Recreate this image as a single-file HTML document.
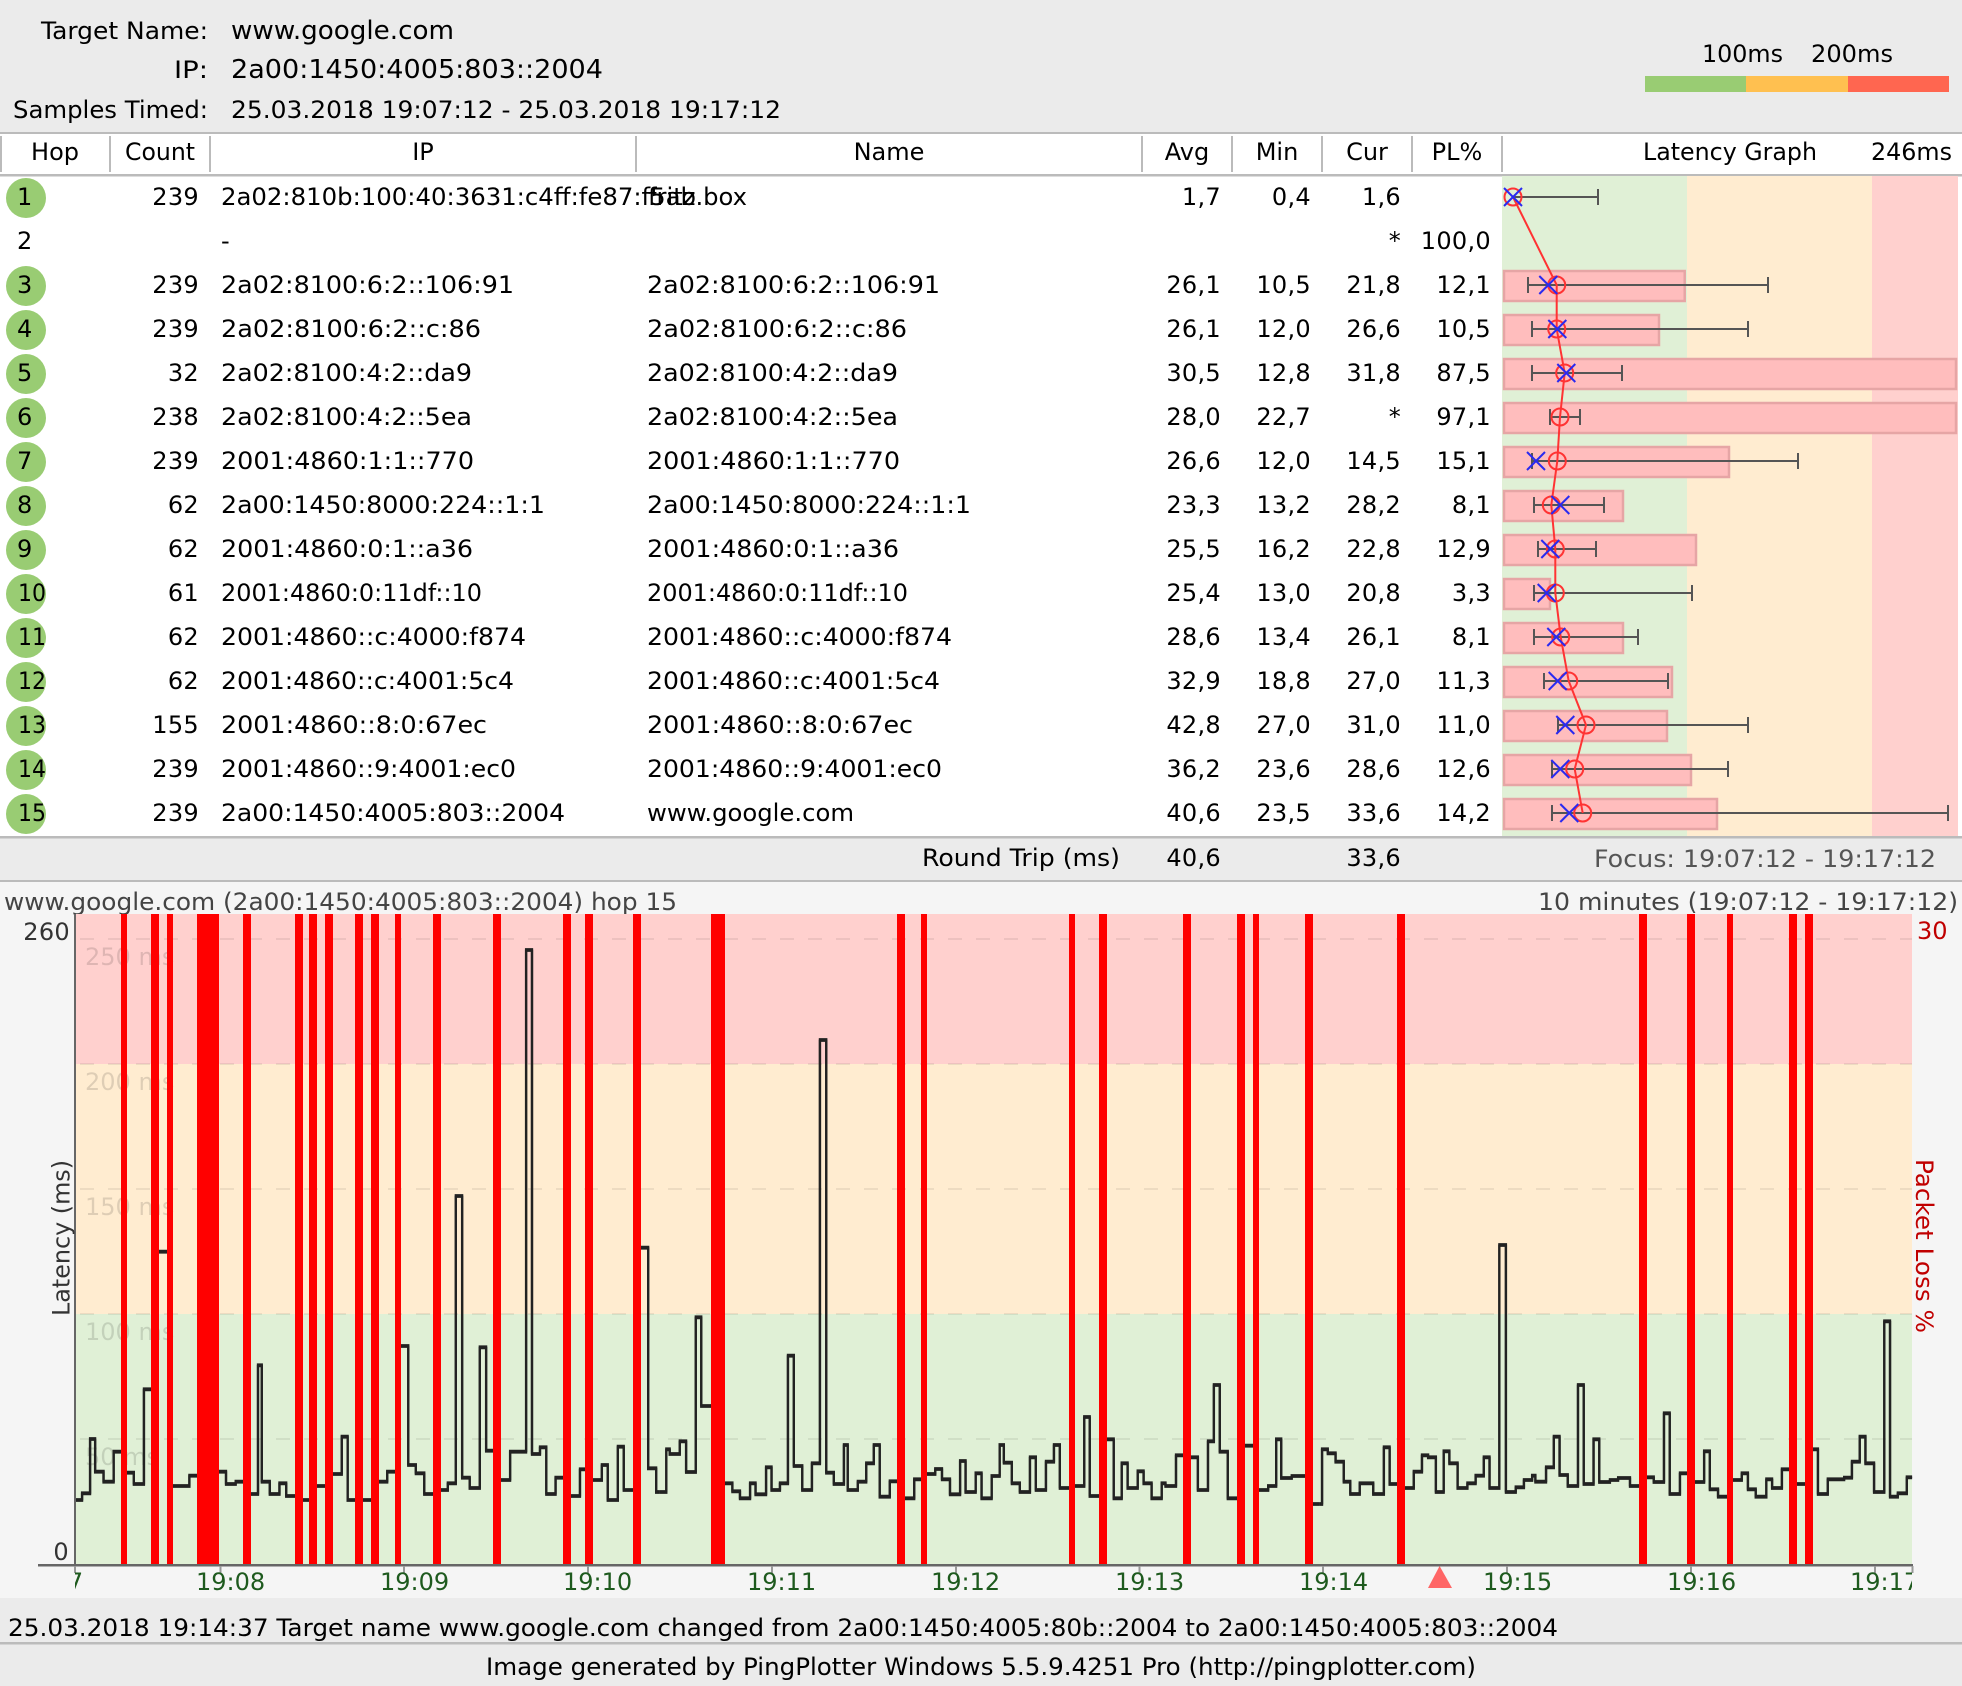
<!DOCTYPE html>
<html><head><meta charset="utf-8"><title>PingPlotter</title>
<style>
html,body{margin:0;padding:0;background:#fff}
svg{display:block;font-family:"DejaVu Sans","Liberation Sans",sans-serif;font-size:24px;fill:#000}
.r{text-anchor:end;letter-spacing:.3px}.c{text-anchor:middle}
</style></head><body>
<svg xmlns="http://www.w3.org/2000/svg" width="1962" height="1686" viewBox="0 0 1962 1686">
<defs>
<clipPath id="cp"><rect x="75" y="1566" width="1837" height="32"/></clipPath>
<path id="x" d="M-9-9L9 9M-9 9L9-9" fill="none" stroke="#2a2af0" stroke-width="2"/>
<path id="pa" fill="none" stroke="#222" stroke-width="2.3" vector-effect="non-scaling-stroke" d="M178 660H195V640H214V477H226V575H246V605H270V515H295V578H318V612H342V328H365V-85H400V618H450V587H490V575H537V612H560V605H585V642H613V256H622V605H641V642H664V610H680V648H710V660H745V618H780V582H812V470H826V660H890V605H920V575H945V198H970V555H988V580H1008V642H1040V630H1064V610H1083V-252H1098V593H1116V624H1140V202H1155V512H1180V600H1212V515H1250V-990H1264V522H1283V502H1298V642H1320V593H1348V648H1378V568H1400V600H1430V555H1444V660H1468V500H1482V630H1515V-97H1540V565H1559V636H1568"/>
<path id="pb" fill="none" stroke="#222" stroke-width="2.3" vector-effect="non-scaling-stroke" d="M0 636H15V508H23V522H47V484H62V576H85V112H98V378H135V610H172V634H190V655H214V610H227V643H252V562H265V630H285V610H304V227H318V558H338V630H361V550H380V-720H395V578H413V612H437V495H446V630H470V605H490V550H508V495H522V650H546V604H570V655H604V598H627V582H654V567H670V598H689V643H713V543H726V636H750V580H764V655H788V588H807V495H817V548H836V610H855V636H879V532H893V630H917V545H936V495H950V624H980V618H1008V411H1021V648H1050V478H1078V655H1097V550H1111V624H1135V574H1149V610H1168V655H1192V610H1201V618H1226V526H1250V532H1278V630H1302V484H1316V315H1330V515H1349V655H1380V497H1415V630H1445V618H1464V478H1476V594H1501V588H1540V672H1568"/>
<path id="pc" fill="none" stroke="#222" stroke-width="2.3" vector-effect="non-scaling-stroke" d="M0 672H5V508H19V520H38V545H58V605H74V642H97V610H130V642H156V502H170V612H198V624H229V575H249V526H264V532H283V636H302V514H316V550H336V624H360V610H380V587H400V532H414V624H438V-105H454V636H478V622H498V600H518V587H526V605H552V562H571V470H585V585H605V618H630V315H644V612H668V478H682V606H708V600H728V594H757V618H790V592H815V606H840V400H854V642H879V580H905V606H938V514H952V628H972V650H1000V600H1030V580H1045V628H1064V650H1090V598H1104V624H1128V568H1155V612H1195V508H1216V642H1240V598H1280V593H1299V545H1318V470H1332V550H1353V636H1378V124H1392V650H1411V640H1433V592H1446"/>
</defs>

<!-- backgrounds -->
<rect width="1962" height="1686" fill="#ebebeb"/>
<rect y="132" width="1962" height="2.5" fill="#bbb"/>
<rect y="134" width="1962" height="702" fill="#fff"/>
<rect y="174" width="1962" height="2.5" fill="#bbb"/>
<rect y="836" width="1962" height="2.5" fill="#bbb"/>
<rect y="880" width="1962" height="2.5" fill="#bbb"/>
<rect y="882" width="1962" height="716" fill="#f5f5f5"/>
<rect y="1642" width="1962" height="2.5" fill="#bbb"/>

<!-- top header -->
<text x="41" y="39" textLength="167" lengthAdjust="spacingAndGlyphs">Target Name:</text>
<text x="174" y="78" textLength="34" lengthAdjust="spacingAndGlyphs">IP:</text>
<text x="13" y="118" textLength="195" lengthAdjust="spacingAndGlyphs">Samples Timed:</text>
<text x="231" y="39" font-size="26" textLength="223" lengthAdjust="spacingAndGlyphs">www.google.com</text>
<text x="231" y="78" font-size="26" textLength="372" lengthAdjust="spacingAndGlyphs">2a00:1450:4005:803::2004</text>
<text x="231" y="118" textLength="550" lengthAdjust="spacingAndGlyphs">25.03.2018 19:07:12 - 25.03.2018 19:17:12</text>
<text x="1702" y="62" textLength="81" lengthAdjust="spacingAndGlyphs">100ms</text>
<text x="1811" y="62" textLength="82" lengthAdjust="spacingAndGlyphs">200ms</text>
<rect x="1645" y="76" width="101" height="16" fill="#99cc73"/>
<rect x="1746" y="76" width="102" height="16" fill="#ffc050"/>
<rect x="1848" y="76" width="101" height="16" fill="#ff6650"/>

<!-- table header -->
<path d="M1 136V172M110 136V172M210 136V172M636 136V172M1142 136V172M1232 136V172M1322 136V172M1412 136V172M1502 136V172" stroke="#bbb" stroke-width="2" fill="none"/>
<g>
<text class="c" x="55" y="160">Hop</text>
<text x="125" y="160" textLength="70" lengthAdjust="spacingAndGlyphs">Count</text>
<text class="c" x="423" y="160">IP</text>
<text class="c" x="889" y="160">Name</text>
<text class="c" x="1187" y="160">Avg</text>
<text class="c" x="1277" y="160">Min</text>
<text class="c" x="1367" y="160">Cur</text>
<text class="c" x="1457" y="160">PL%</text>
<text x="1643" y="160" textLength="174" lengthAdjust="spacingAndGlyphs">Latency Graph</text>
<text x="1871" y="160" textLength="81" lengthAdjust="spacingAndGlyphs">246ms</text>
</g>

<!-- hop circles -->
<g fill="#99cc73">
<circle cx="26" cy="198" r="20"/><circle cx="26" cy="286" r="20"/><circle cx="26" cy="330" r="20"/><circle cx="26" cy="374" r="20"/><circle cx="26" cy="418" r="20"/><circle cx="26" cy="462" r="20"/><circle cx="26" cy="506" r="20"/><circle cx="26" cy="550" r="20"/><circle cx="26" cy="594" r="20"/><circle cx="26" cy="638" r="20"/><circle cx="26" cy="682" r="20"/><circle cx="26" cy="726" r="20"/><circle cx="26" cy="770" r="20"/><circle cx="26" cy="814" r="20"/>
</g>

<!-- rows -->
<g transform="translate(0,205)"><text x="17">1</text><text class="r" x="199">239</text><text x="221" textLength="475" lengthAdjust="spacingAndGlyphs">2a02:810b:100:40:3631:c4ff:fe87:f5ab</text><text x="648" textLength="99" lengthAdjust="spacingAndGlyphs">fritz.box</text><text class="r" x="1221">1,7</text><text class="r" x="1311">0,4</text><text class="r" x="1401">1,6</text></g>
<g transform="translate(0,249)"><text x="17">2</text><text x="221">-</text><text class="r" x="1401">*</text><text class="r" x="1491">100,0</text></g>
<g transform="translate(0,293)"><text x="17">3</text><text class="r" x="199">239</text><text x="221" textLength="293" lengthAdjust="spacingAndGlyphs">2a02:8100:6:2::106:91</text><text x="647" textLength="293" lengthAdjust="spacingAndGlyphs">2a02:8100:6:2::106:91</text><text class="r" x="1221">26,1</text><text class="r" x="1311">10,5</text><text class="r" x="1401">21,8</text><text class="r" x="1491">12,1</text></g>
<g transform="translate(0,337)"><text x="17">4</text><text class="r" x="199">239</text><text x="221" textLength="260" lengthAdjust="spacingAndGlyphs">2a02:8100:6:2::c:86</text><text x="647" textLength="260" lengthAdjust="spacingAndGlyphs">2a02:8100:6:2::c:86</text><text class="r" x="1221">26,1</text><text class="r" x="1311">12,0</text><text class="r" x="1401">26,6</text><text class="r" x="1491">10,5</text></g>
<g transform="translate(0,381)"><text x="17">5</text><text class="r" x="199">32</text><text x="221" textLength="251" lengthAdjust="spacingAndGlyphs">2a02:8100:4:2::da9</text><text x="647" textLength="251" lengthAdjust="spacingAndGlyphs">2a02:8100:4:2::da9</text><text class="r" x="1221">30,5</text><text class="r" x="1311">12,8</text><text class="r" x="1401">31,8</text><text class="r" x="1491">87,5</text></g>
<g transform="translate(0,425)"><text x="17">6</text><text class="r" x="199">238</text><text x="221" textLength="251" lengthAdjust="spacingAndGlyphs">2a02:8100:4:2::5ea</text><text x="647" textLength="251" lengthAdjust="spacingAndGlyphs">2a02:8100:4:2::5ea</text><text class="r" x="1221">28,0</text><text class="r" x="1311">22,7</text><text class="r" x="1401">*</text><text class="r" x="1491">97,1</text></g>
<g transform="translate(0,469)"><text x="17">7</text><text class="r" x="199">239</text><text x="221" textLength="253" lengthAdjust="spacingAndGlyphs">2001:4860:1:1::770</text><text x="647" textLength="253" lengthAdjust="spacingAndGlyphs">2001:4860:1:1::770</text><text class="r" x="1221">26,6</text><text class="r" x="1311">12,0</text><text class="r" x="1401">14,5</text><text class="r" x="1491">15,1</text></g>
<g transform="translate(0,513)"><text x="17">8</text><text class="r" x="199">62</text><text x="221" textLength="324" lengthAdjust="spacingAndGlyphs">2a00:1450:8000:224::1:1</text><text x="647" textLength="324" lengthAdjust="spacingAndGlyphs">2a00:1450:8000:224::1:1</text><text class="r" x="1221">23,3</text><text class="r" x="1311">13,2</text><text class="r" x="1401">28,2</text><text class="r" x="1491">8,1</text></g>
<g transform="translate(0,557)"><text x="17">9</text><text class="r" x="199">62</text><text x="221" textLength="252" lengthAdjust="spacingAndGlyphs">2001:4860:0:1::a36</text><text x="647" textLength="252" lengthAdjust="spacingAndGlyphs">2001:4860:0:1::a36</text><text class="r" x="1221">25,5</text><text class="r" x="1311">16,2</text><text class="r" x="1401">22,8</text><text class="r" x="1491">12,9</text></g>
<g transform="translate(0,601)"><text x="18" textLength="28" lengthAdjust="spacingAndGlyphs">10</text><text class="r" x="199">61</text><text x="221" textLength="261" lengthAdjust="spacingAndGlyphs">2001:4860:0:11df::10</text><text x="647" textLength="261" lengthAdjust="spacingAndGlyphs">2001:4860:0:11df::10</text><text class="r" x="1221">25,4</text><text class="r" x="1311">13,0</text><text class="r" x="1401">20,8</text><text class="r" x="1491">3,3</text></g>
<g transform="translate(0,645)"><text x="18" textLength="28" lengthAdjust="spacingAndGlyphs">11</text><text class="r" x="199">62</text><text x="221" textLength="305" lengthAdjust="spacingAndGlyphs">2001:4860::c:4000:f874</text><text x="647" textLength="305" lengthAdjust="spacingAndGlyphs">2001:4860::c:4000:f874</text><text class="r" x="1221">28,6</text><text class="r" x="1311">13,4</text><text class="r" x="1401">26,1</text><text class="r" x="1491">8,1</text></g>
<g transform="translate(0,689)"><text x="18" textLength="28" lengthAdjust="spacingAndGlyphs">12</text><text class="r" x="199">62</text><text x="221" textLength="293" lengthAdjust="spacingAndGlyphs">2001:4860::c:4001:5c4</text><text x="647" textLength="293" lengthAdjust="spacingAndGlyphs">2001:4860::c:4001:5c4</text><text class="r" x="1221">32,9</text><text class="r" x="1311">18,8</text><text class="r" x="1401">27,0</text><text class="r" x="1491">11,3</text></g>
<g transform="translate(0,733)"><text x="18" textLength="28" lengthAdjust="spacingAndGlyphs">13</text><text class="r" x="199">155</text><text x="221" textLength="266" lengthAdjust="spacingAndGlyphs">2001:4860::8:0:67ec</text><text x="647" textLength="266" lengthAdjust="spacingAndGlyphs">2001:4860::8:0:67ec</text><text class="r" x="1221">42,8</text><text class="r" x="1311">27,0</text><text class="r" x="1401">31,0</text><text class="r" x="1491">11,0</text></g>
<g transform="translate(0,777)"><text x="18" textLength="28" lengthAdjust="spacingAndGlyphs">14</text><text class="r" x="199">239</text><text x="221" textLength="295" lengthAdjust="spacingAndGlyphs">2001:4860::9:4001:ec0</text><text x="647" textLength="295" lengthAdjust="spacingAndGlyphs">2001:4860::9:4001:ec0</text><text class="r" x="1221">36,2</text><text class="r" x="1311">23,6</text><text class="r" x="1401">28,6</text><text class="r" x="1491">12,6</text></g>
<g transform="translate(0,821)"><text x="18" textLength="28" lengthAdjust="spacingAndGlyphs">15</text><text class="r" x="199">239</text><text x="221" textLength="344" lengthAdjust="spacingAndGlyphs">2a00:1450:4005:803::2004</text><text x="647" textLength="207" lengthAdjust="spacingAndGlyphs">www.google.com</text><text class="r" x="1221">40,6</text><text class="r" x="1311">23,5</text><text class="r" x="1401">33,6</text><text class="r" x="1491">14,2</text></g>

<!-- latency graph -->
<rect x="1502" y="176" width="185" height="660" fill="#e0f0d6"/>
<rect x="1687" y="176" width="185" height="660" fill="#ffecd0"/>
<rect x="1872" y="176" width="86" height="660" fill="#ffd0ce"/>
<g fill="#ffbdbd" stroke="#e6a5a5" stroke-width="2.5">
<rect x="1504" y="271" width="180.7" height="30"/>
<rect x="1504" y="315" width="155" height="30"/>
<rect x="1504" y="359" width="452" height="30"/>
<rect x="1504" y="403" width="452" height="30"/>
<rect x="1504" y="447" width="225" height="30"/>
<rect x="1504" y="491" width="119" height="30"/>
<rect x="1504" y="535" width="192" height="30"/>
<rect x="1504" y="579" width="46" height="30"/>
<rect x="1504" y="623" width="119" height="30"/>
<rect x="1504" y="667" width="168" height="30"/>
<rect x="1504" y="711" width="163" height="30"/>
<rect x="1504" y="755" width="187" height="30"/>
<rect x="1504" y="799" width="213" height="30"/>
</g>
<path fill="none" stroke="#555" stroke-width="2" d="M1513 197H1598M1598 189V205M1528 285H1768M1528 277V293M1768 277V293M1532 329H1748M1532 321V337M1748 321V337M1532 373H1622M1532 365V381M1622 365V381M1550 417H1580M1550 409V425M1580 409V425M1532 461H1798M1532 453V469M1798 453V469M1534 505H1604M1534 497V513M1604 497V513M1538 549H1596M1538 541V557M1596 541V557M1534 593H1692M1534 585V601M1692 585V601M1534 637H1638M1534 629V645M1638 629V645M1544 681H1668M1544 673V689M1668 673V689M1558 725H1748M1558 717V733M1748 717V733M1552 769H1728M1552 761V777M1728 761V777M1552 813H1948M1552 805V821M1948 805V821"/>
<polyline fill="none" stroke="#f33" stroke-width="2" points="1513,197 1556.7,285 1556.7,329 1564.7,373 1560,417 1557.3,461 1551.3,505 1555.3,549 1555.3,593 1560.7,637 1568.7,681 1586,725 1574.7,769 1582.7,813"/>
<g fill="none" stroke="#f33" stroke-width="2">
<circle cx="1513" cy="197" r="8.5"/><circle cx="1556.7" cy="285" r="8.5"/><circle cx="1556.7" cy="329" r="8.5"/><circle cx="1564.7" cy="373" r="8.5"/><circle cx="1560" cy="417" r="8.5"/><circle cx="1557.3" cy="461" r="8.5"/><circle cx="1551.3" cy="505" r="8.5"/><circle cx="1555.3" cy="549" r="8.5"/><circle cx="1555.3" cy="593" r="8.5"/><circle cx="1560.7" cy="637" r="8.5"/><circle cx="1568.7" cy="681" r="8.5"/><circle cx="1586" cy="725" r="8.5"/><circle cx="1574.7" cy="769" r="8.5"/><circle cx="1582.7" cy="813" r="8.5"/>
</g>
<use href="#x" x="1513" y="197"/><use href="#x" x="1548.3" y="285"/><use href="#x" x="1557.3" y="329"/><use href="#x" x="1566.3" y="373"/><use href="#x" x="1536" y="461"/><use href="#x" x="1560.3" y="505"/><use href="#x" x="1550.3" y="549"/><use href="#x" x="1546.7" y="593"/><use href="#x" x="1556.3" y="637"/><use href="#x" x="1557.7" y="681"/><use href="#x" x="1565.3" y="725"/><use href="#x" x="1560.3" y="769"/><use href="#x" x="1569.3" y="813"/>

<!-- round trip row -->
<text x="922" y="866" textLength="198" lengthAdjust="spacingAndGlyphs">Round Trip (ms)</text>
<text class="r" x="1221" y="866">40,6</text>
<text class="r" x="1401" y="866">33,6</text>
<text x="1594" y="867" textLength="342" lengthAdjust="spacingAndGlyphs" style="fill:#555">Focus: 19:07:12 - 19:17:12</text>

<!-- title row -->
<text x="4" y="910" style="fill:#444" textLength="673" lengthAdjust="spacingAndGlyphs">www.google.com (2a00:1450:4005:803::2004) hop 15</text>
<text x="1538" y="910" style="fill:#444" textLength="420" lengthAdjust="spacingAndGlyphs">10 minutes (19:07:12 - 19:17:12)</text>

<!-- plot zones -->
<rect x="75" y="914" width="1837" height="150" fill="#ffd0ce"/>
<rect x="75" y="1064" width="1837" height="250" fill="#ffecd0"/>
<rect x="75" y="1314" width="1837" height="250" fill="#e0f0d6"/>
<g stroke="#000" stroke-opacity=".07" stroke-width="2" stroke-dasharray="14 14">
<path d="M80 939H1912M80 1064H1912M80 1189H1912M80 1314H1912M80 1439H1912"/>
</g>
<text x="85" y="965" style="fill:#000;fill-opacity:.13">250 ms</text>
<text x="85" y="1090" style="fill:#000;fill-opacity:.13">200 ms</text>
<text x="85" y="1215" style="fill:#000;fill-opacity:.13">150 ms</text>
<text x="85" y="1340" style="fill:#000;fill-opacity:.13">100 ms</text>
<text x="85" y="1465" style="fill:#000;fill-opacity:.13">50 ms</text>

<!-- latency line -->
<g transform="translate(0,1280) scale(.42088,.33333)"><use href="#pa" y="-2.25"/><use href="#pa" y="2.25"/></g>
<g transform="translate(660,1280) scale(.42088,.33333)"><use href="#pb" y="-2.25"/><use href="#pb" y="2.25"/></g>
<g transform="translate(1320,1280) scale(.4095,.33333)"><use href="#pc" y="-2.25"/><use href="#pc" y="2.25"/></g>

<!-- packet loss bars -->
<g fill="#f00">
<rect x="121" y="914" width="6" height="650"/>
<rect x="151" y="914" width="8" height="650"/>
<rect x="167" y="914" width="6" height="650"/>
<rect x="197" y="914" width="22" height="650"/>
<rect x="243" y="914" width="8" height="650"/>
<rect x="295" y="914" width="8" height="650"/>
<rect x="309" y="914" width="8" height="650"/>
<rect x="325" y="914" width="8" height="650"/>
<rect x="355" y="914" width="8" height="650"/>
<rect x="371" y="914" width="8" height="650"/>
<rect x="395" y="914" width="6" height="650"/>
<rect x="433" y="914" width="8" height="650"/>
<rect x="493" y="914" width="8" height="650"/>
<rect x="563" y="914" width="8" height="650"/>
<rect x="585" y="914" width="8" height="650"/>
<rect x="633" y="914" width="8" height="650"/>
<rect x="711" y="914" width="14" height="650"/>
<rect x="897" y="914" width="8" height="650"/>
<rect x="921" y="914" width="6" height="650"/>
<rect x="1069" y="914" width="6" height="650"/>
<rect x="1099" y="914" width="8" height="650"/>
<rect x="1183" y="914" width="8" height="650"/>
<rect x="1237" y="914" width="8" height="650"/>
<rect x="1253" y="914" width="6" height="650"/>
<rect x="1305" y="914" width="8" height="650"/>
<rect x="1397" y="914" width="8" height="650"/>
<rect x="1639" y="914" width="8" height="650"/>
<rect x="1687" y="914" width="8" height="650"/>
<rect x="1727" y="914" width="6" height="650"/>
<rect x="1789" y="914" width="8" height="650"/>
<rect x="1805" y="914" width="8" height="650"/>
</g>

<!-- axes -->
<rect x="74" y="914" width="2" height="651" fill="#666"/>
<rect x="38" y="1564" width="1875" height="2.5" fill="#666"/>
<path d="M220.5 1566V1573M404 1566V1573M588 1566V1573M772 1566V1573M956 1566V1573M1139.5 1566V1573M1323 1566V1573M1507 1566V1573M1691 1566V1573M1875 1566V1573M1912.5 1566V1573M75 1566V1573" stroke="#999" stroke-width="2" fill="none"/>

<text class="r" x="70" y="940" style="fill:#333">260</text>
<text class="r" x="69" y="1560" style="fill:#333">0</text>
<text x="1917" y="939" style="fill:#c00000">30</text>
<text transform="translate(69.5,1316) rotate(-90)" style="fill:#333" textLength="156" lengthAdjust="spacingAndGlyphs">Latency (ms)</text>
<text transform="translate(1916,1159) rotate(90)" style="fill:#c00000" textLength="174" lengthAdjust="spacingAndGlyphs">Packet Loss %</text>

<!-- time labels -->
<g clip-path="url(#cp)">
<text x="14" y="1590" style="fill:#1e5a1e">19:07</text>
<text x="196" y="1590" style="fill:#1e5a1e">19:08</text>
<text x="380" y="1590" style="fill:#1e5a1e">19:09</text>
<text x="563" y="1590" style="fill:#1e5a1e">19:10</text>
<text x="747" y="1590" style="fill:#1e5a1e">19:11</text>
<text x="931" y="1590" style="fill:#1e5a1e">19:12</text>
<text x="1115" y="1590" style="fill:#1e5a1e">19:13</text>
<text x="1299" y="1590" style="fill:#1e5a1e">19:14</text>
<text x="1483" y="1590" style="fill:#1e5a1e">19:15</text>
<text x="1667" y="1590" style="fill:#1e5a1e">19:16</text>
<text x="1850" y="1590" style="fill:#1e5a1e">19:17</text>
</g>
<polygon points="1439.6,1566 1452,1588 1428,1588" fill="#ff6666"/>

<!-- bottom -->
<text x="8" y="1636" textLength="1550" lengthAdjust="spacingAndGlyphs">25.03.2018 19:14:37 Target name www.google.com changed from 2a00:1450:4005:80b::2004 to 2a00:1450:4005:803::2004</text>
<text x="486" y="1675" textLength="990" lengthAdjust="spacingAndGlyphs">Image generated by PingPlotter Windows 5.5.9.4251 Pro (http://pingplotter.com)</text>
</svg>
</body></html>
